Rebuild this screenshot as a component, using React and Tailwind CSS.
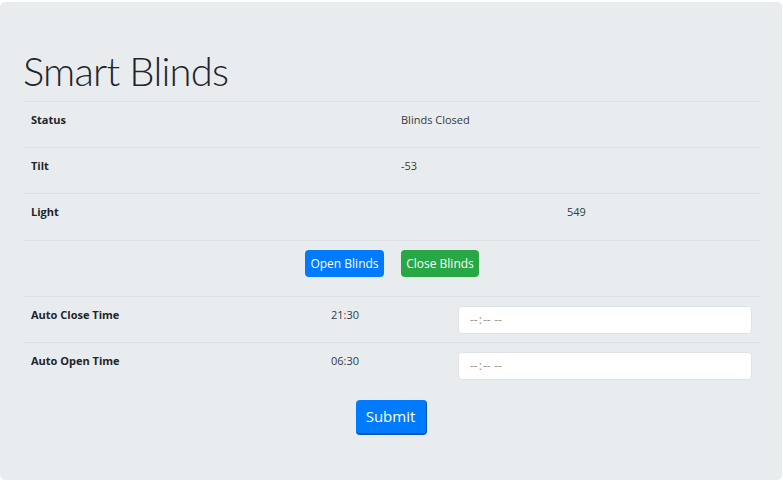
import { useState } from "react";

const font = { fontFamily: '"Open Sans", "Noto Sans", sans-serif' };
const titleFont = { fontFamily: 'Lato, "Open Sans", sans-serif' };

function Row({ children, className = "" }) {
  return (
    <div className={`flex border-t border-[#dee2e6] ${className}`}>{children}</div>
  );
}

function Label({ children, w }) {
  return (
    <div className={`pl-[8px] pt-[8px] text-[11px] leading-[20px] font-bold text-[#212529] ${w}`}>
      {children}
    </div>
  );
}

function Value({ children, w = "" }) {
  return (
    <div className={`pt-[8px] text-[11px] leading-[20px] text-[#343a40] ${w}`}>{children}</div>
  );
}

function TimeInput() {
  const [v, setV] = useState("");
  return (
    <input
      type="time"
      value={v}
      onChange={(e) => setV(e.target.value)}
      className="mt-[9px] h-[28px] w-[294px] rounded-[4px] border border-[#dfe3e7] bg-white px-[10px] text-[12px] text-[#999] [&::-webkit-calendar-picker-indicator]:hidden"
    />
  );
}

export default function App() {
  const [status, setStatus] = useState("Blinds Closed");

  return (
    <div className="min-h-[484px] bg-white pt-[2px]" style={font}>
      <div className="h-[478px] w-[782px] rounded-[5px] bg-[#e9ecef] pl-[23px] pr-[22px]">
        <div className="h-[99px] pt-[44px]">
          <h1
            className="text-[40px] leading-[50px] font-light tracking-[-0.8px] text-[#212529]"
            style={titleFont}
          >
            Smart Blinds
          </h1>
        </div>

        <Row className="h-[46px]">
          <Label w="w-[378px]">Status</Label>
          <Value>{status}</Value>
        </Row>
        <Row className="h-[46px]">
          <Label w="w-[378px]">Tilt</Label>
          <Value>-53</Value>
        </Row>
        <Row className="h-[47px]">
          <Label w="w-[544px]">Light</Label>
          <Value>549</Value>
        </Row>
        <Row className="h-[56px]">
          <div className="w-[282px]" />
          <button
            onClick={() => setStatus("Blinds Open")}
            className="mt-[9px] h-[27px] w-[79px] rounded-[4px] bg-[#007bff] text-[12px] text-white"
          >
            Open Blinds
          </button>
          <div className="w-[17px]" />
          <button
            onClick={() => setStatus("Blinds Closed")}
            className="mt-[9px] h-[27px] w-[78px] rounded-[4px] bg-[#28a745] text-[12px] text-white"
          >
            Close Blinds
          </button>
        </Row>
        <Row className="h-[46px]">
          <Label w="w-[308px]">Auto Close Time</Label>
          <Value w="w-[127px]">21:30</Value>
          <TimeInput />
        </Row>
        <Row className="h-[46px]">
          <Label w="w-[308px]">Auto Open Time</Label>
          <Value w="w-[127px]">06:30</Value>
          <TimeInput />
        </Row>

        <div className="flex justify-center pt-[12px] pr-[1px]">
          <button className="h-[35px] w-[71px] rounded-[4px] border-b-2 border-r border-[#0056b3] bg-[#007bff] text-[15px] text-white">
            Submit
          </button>
        </div>
      </div>
    </div>
  );
}
